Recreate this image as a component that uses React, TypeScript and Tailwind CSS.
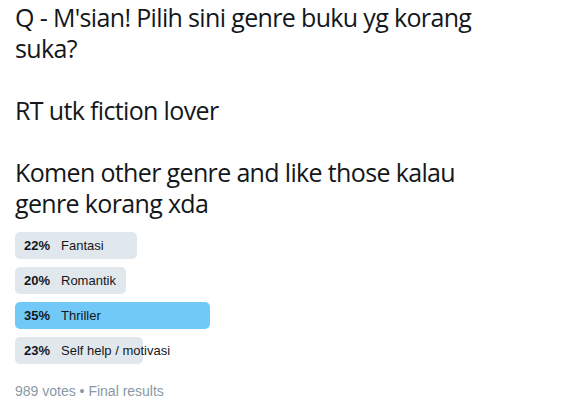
const options = [
  { pct: 22, label: "Fantasi", top: false },
  { pct: 20, label: "Romantik", top: false },
  { pct: 35, label: "Thriller", top: true },
  { pct: 23, label: "Self help / motivasi", top: false },
]

export default function App() {
  return (
    <div className="w-[586px] h-[410px] bg-white overflow-hidden px-[15px] pt-[2px]">
      <p className="font-['Open_Sans',sans-serif] text-[25px] leading-[31px] tracking-[-0.65px] text-[#14171a] whitespace-pre-line">
        {"Q - M'sian! Pilih sini genre buku yg korang\nsuka?\n\nRT utk fiction lover\n\nKomen other genre and like those kalau\ngenre korang xda"}
      </p>
      <div className="mt-[13px] w-[556px] flex flex-col gap-2 font-['Liberation_Sans',Arial,sans-serif] text-[13px] text-[#14171a]">
        {options.map((o) => (
          <div key={o.label} className="relative h-[27px]">
            <div
              className={o.top ? "absolute inset-y-0 left-0 rounded-[5px] bg-[#71c9f8]" : "absolute inset-y-0 left-0 rounded-[5px] bg-[#e1e8ed]"}
              style={{ width: `${o.pct}%` }}
            />
            <div className="relative flex items-center h-full pl-[9px]">
              <span className="font-bold w-[37px]">{o.pct}%</span>
              <span>{o.label}</span>
            </div>
          </div>
        ))}
      </div>
      <div className="mt-[17px] font-['Liberation_Sans',Arial,sans-serif] text-[14px] text-[#8899a6]">
        989 votes • Final results
      </div>
    </div>
  )
}
